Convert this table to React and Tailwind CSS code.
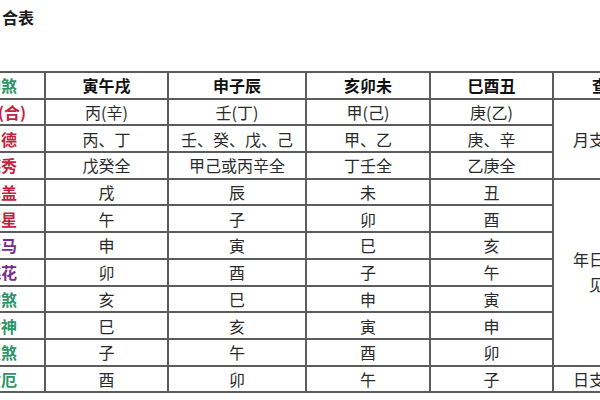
import React from "react";

const RED = "text-[#c4233f]";
const PURPLE = "text-[#7a2c8c]";
const GREEN = "text-[#2f9468]";

const rows = [
  { label: "天德(合)", color: RED, cells: ["丙(辛)", "壬(丁)", "甲(己)", "庚(乙)"], shift: true },
  { label: "月德", color: RED, cells: ["丙、丁", "壬、癸、戊、己", "甲、乙", "庚、辛"], dashed: true },
  { label: "德秀", color: RED, cells: ["戊癸全", "甲己或丙辛全", "丁壬全", "乙庚全"] },
  { label: "华盖", color: RED, cells: ["戌", "辰", "未", "丑"] },
  { label: "将星", color: RED, cells: ["午", "子", "卯", "酉"] },
  { label: "驿马", color: PURPLE, cells: ["申", "寅", "巳", "亥"] },
  { label: "桃花", color: PURPLE, cells: ["卯", "酉", "子", "午"] },
  { label: "劫煞", color: GREEN, cells: ["亥", "巳", "申", "寅"] },
  { label: "亡神", color: GREEN, cells: ["巳", "亥", "寅", "申"] },
  { label: "灾煞", color: GREEN, cells: ["子", "午", "酉", "卯"] },
  { label: "六厄", color: GREEN, cells: ["酉", "卯", "午", "子"] },
];

const td = "border-2 border-[#5c5c5c] p-0 text-center align-middle";

export default function App() {
  return (
    <div
      className="w-[600px] h-[400px] overflow-hidden bg-white"
      style={{ fontFamily: '"Noto Sans CJK SC", "Noto Sans", sans-serif' }}
    >
      <div className="pt-[7px] pl-[2px] h-[71px]">
        <div className="text-[16px] leading-[20px] font-bold text-[#1a1a1a]">合表</div>
      </div>
      <table className="table-fixed border-collapse ml-[-44px] w-[684px] text-[16px] leading-[20px] text-[#2a2a2a]">
        <colgroup>
          <col className="w-[88px]" />
          <col className="w-[123px]" />
          <col className="w-[138px]" />
          <col className="w-[124px]" />
          <col className="w-[123px]" />
          <col className="w-[88px]" />
        </colgroup>
        <tbody>
          <tr className="h-[26.7px]">
            <td className={`${td} font-bold ${GREEN}`}>神煞</td>
            <td className={`${td} font-bold text-[#111]`}>寅午戌</td>
            <td className={`${td} font-bold text-[#111]`}>申子辰</td>
            <td className={`${td} font-bold text-[#111]`}>亥卯未</td>
            <td className={`${td} font-bold text-[#111]`}>巳酉丑</td>
            <td className={`${td} font-bold text-[#111] pl-[22px]`}>查法</td>
          </tr>
          {rows.map((r, i) => (
            <tr key={i} className="h-[26.7px]">
              <td
                className={`${td} font-bold ${r.color} ${
                  r.dashed ? "border-b-[#8a8a8a] border-dashed" : ""
                } ${r.shift ? "pr-[10px]" : ""}`}
              >
                {r.label}
              </td>
              {r.cells.map((c, j) => (
                <td key={j} className={td}>
                  {c}
                </td>
              ))}
              {i === 0 && (
                <td rowSpan={3} className={td}>
                  月支见
                </td>
              )}
              {i === 3 && (
                <td rowSpan={7} className={td}>
                  <div className="leading-[25px]">年日支</div>
                  <div className="leading-[25px]">见</div>
                </td>
              )}
              {i === 10 && <td className={td}>日支见</td>}
            </tr>
          ))}
        </tbody>
      </table>
    </div>
  );
}
